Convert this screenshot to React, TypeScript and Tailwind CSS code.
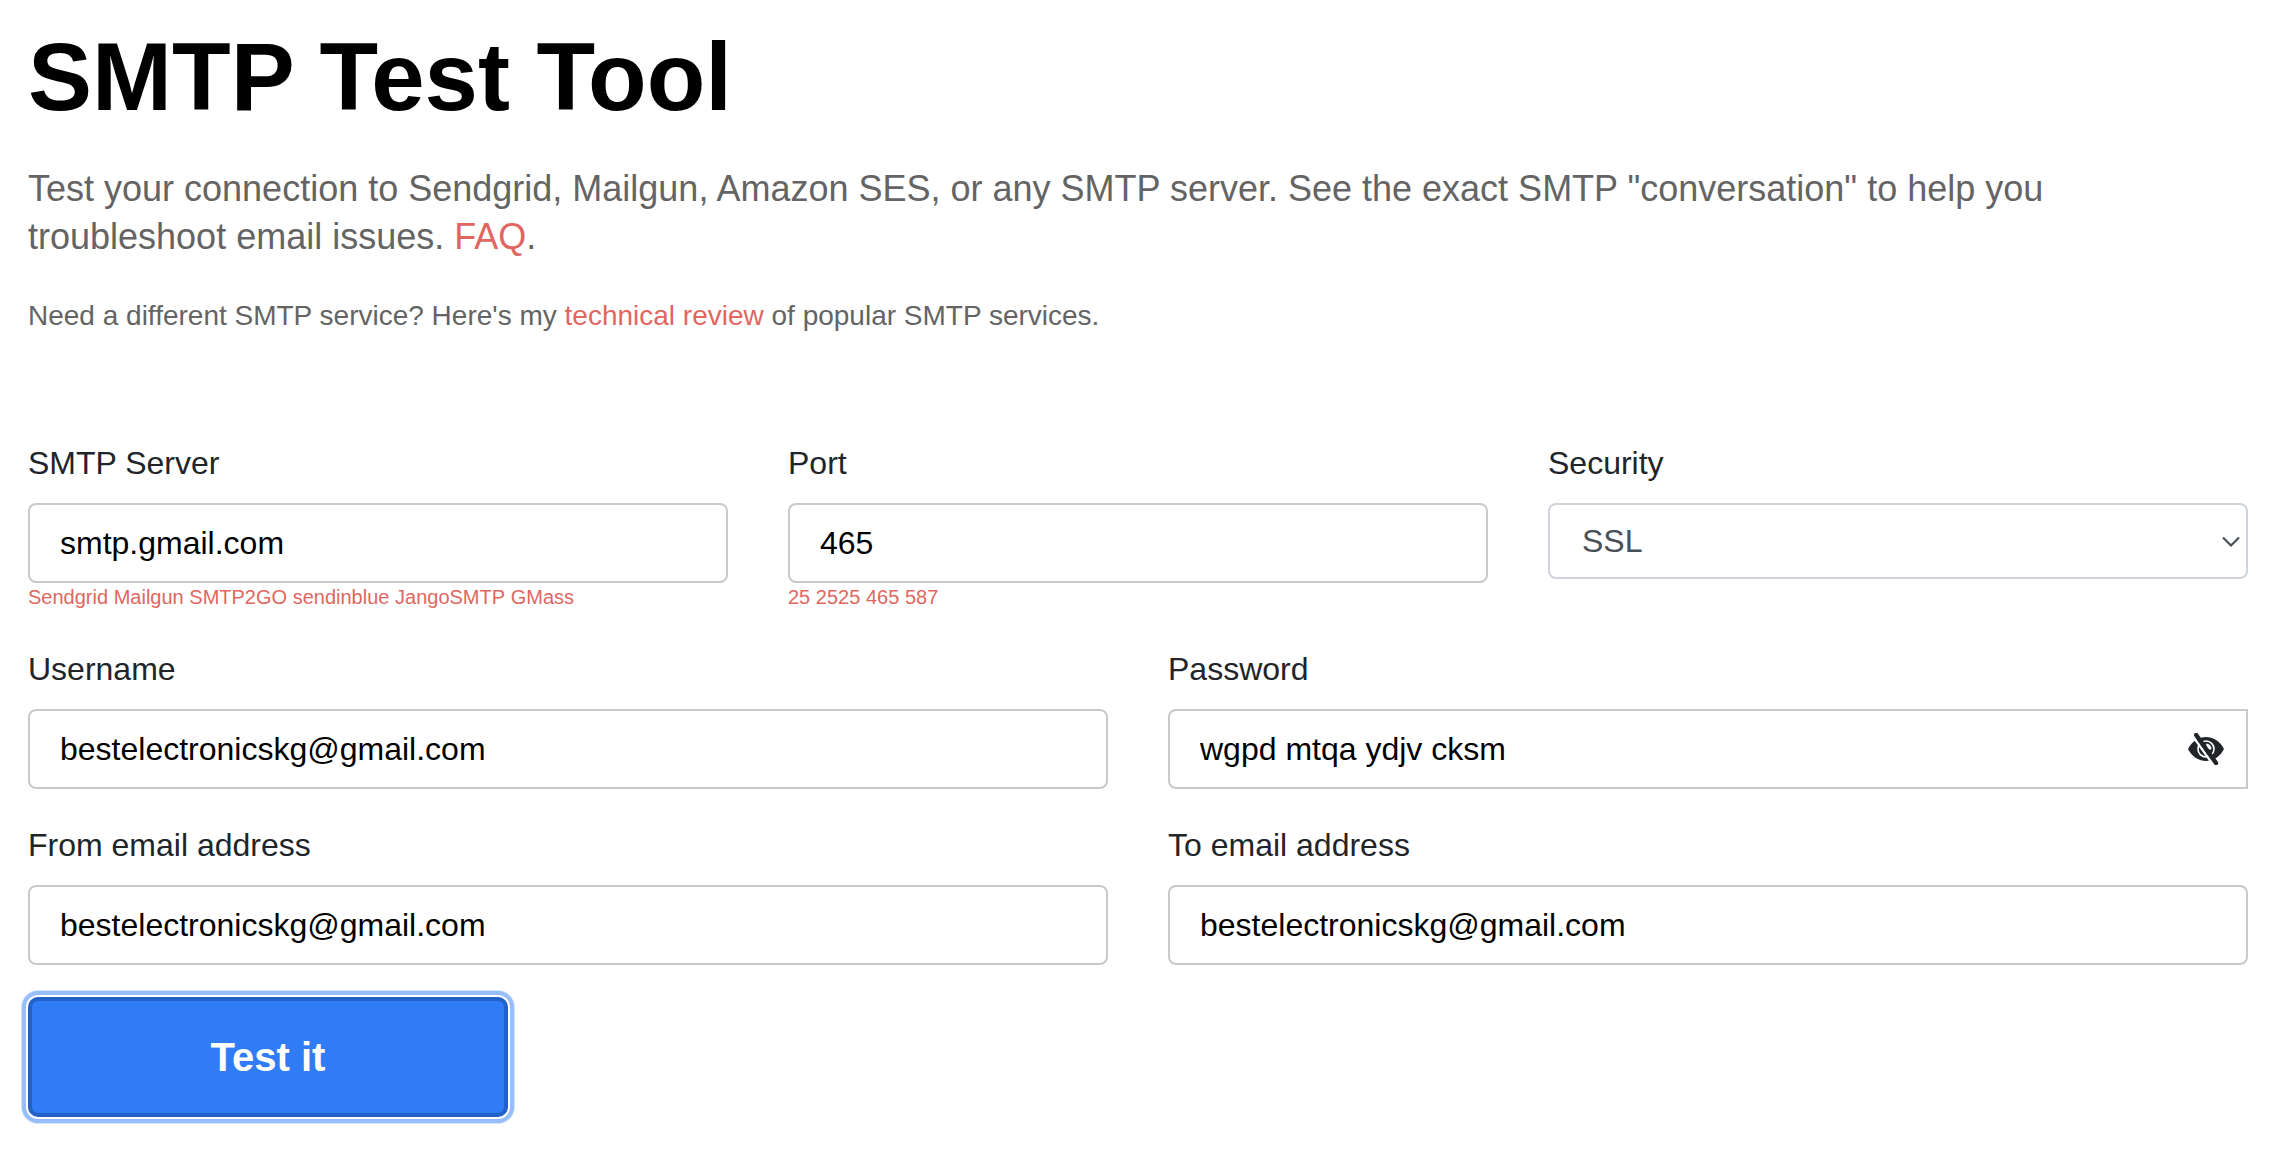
import React, { ReactNode } from "react";

function Field({ label, children }: { label: string; children: ReactNode }) {
  return (
    <div className="min-w-0 flex-1">
      <label className="block text-[32px] leading-12 text-[#212529]">{label}</label>
      <div className="mt-4">{children}</div>
    </div>
  );
}

function TextInput({ value, className = "rounded-lg" }: { value: string; className?: string }) {
  return (
    <input
      defaultValue={value}
      className={`block h-20 w-full border-2 border-[#c9c9c9] bg-white px-[30px] text-[32px] text-black outline-none ${className}`}
    />
  );
}

function Presets({ items }: { items: string[] }) {
  return (
    <div className="mb-0.5 flex gap-[5.6px] text-[20px] leading-7 text-[#e0675f]">
      {items.map((item) => (
        <a key={item} href="#">{item}</a>
      ))}
    </div>
  );
}

function EyeOff() {
  return (
    <svg viewBox="0 0 36 32" className="h-8 w-9" fill="none">
      <path d="M0 16C4 8 11 4 18 4S32 8 36 16C32 24 25 28 18 28S4 24 0 16Z" fill="#212529" />
      <circle cx="18" cy="16" r="8" stroke="#fff" strokeWidth="1.600" />
      <path d="M18 10.500a5.500 5.500 0 0 1 5.500 5.500a3.200 3.200 0 0 1-5-2.500Z" fill="#fff" />
      <path d="M5.300 3.900 25.300 31.900" stroke="#fff" strokeWidth="2.400" />
      <path d="M8.200 2 28 30" stroke="#212529" strokeWidth="4.400" strokeLinecap="round" />
    </svg>
  );
}

export default function App() {
  return (
    <main className="h-[1166px] w-full overflow-hidden bg-white pr-[46px] pl-7 pt-[29px] font-['Liberation_Sans',Arial,sans-serif]">
      <h1 className="text-[96px] leading-24 font-bold text-black">SMTP Test Tool</h1>
      <p className="mt-10 text-[36px] leading-12 text-[#646464]">
        Test your connection to Sendgrid, Mailgun, Amazon SES, or any SMTP server. See the exact SMTP "conversation" to help you
        <br />
        troubleshoot email issues. <a href="#" className="text-[#e0675f]">FAQ</a>.
      </p>
      <p className="mt-[35px] text-[28px] leading-10 text-[#646464]">
        Need a different SMTP service? Here's my <a href="#" className="text-[#e0675f]">technical review</a> of popular SMTP services.
      </p>

      <form>
        <div className="mt-[103px] flex gap-[60px]">
          <Field label="SMTP Server">
            <TextInput value="smtp.gmail.com" />
            <Presets items={["Sendgrid", "Mailgun", "SMTP2GO", "sendinblue", "JangoSMTP", "GMass"]} />
          </Field>
          <Field label="Port">
            <TextInput value="465" />
            <Presets items={["25", "2525", "465", "587"]} />
          </Field>
          <Field label="Security">
            <button type="button" className="flex h-[76px] w-full items-center justify-between rounded-lg border-2 border-[#ced4da] bg-white pr-1.5 pl-8 text-[32px] text-[#495057]">
              SSL
              <svg viewBox="0 0 18 11" className="h-[11px] w-[18px]" fill="none">
                <path d="M1 1.500 9 9.500 17 1.500" stroke="#495057" strokeWidth="2.200" />
              </svg>
            </button>
          </Field>
        </div>

        <div className="mt-8 flex gap-[60px]">
          <Field label="Username">
            <TextInput value="bestelectronicskg@gmail.com" />
          </Field>
          <Field label="Password">
            <div className="relative">
              <TextInput value="wgpd mtqa ydjv cksm" className="rounded-l-lg" />
              <button type="button" aria-label="Hide password" className="absolute top-6 right-6">
                <EyeOff />
              </button>
            </div>
          </Field>
        </div>

        <div className="mt-8 flex gap-[60px]">
          <Field label="From email address">
            <TextInput value="bestelectronicskg@gmail.com" />
          </Field>
          <Field label="To email address">
            <TextInput value="bestelectronicskg@gmail.com" />
          </Field>
        </div>

        <button type="button" className="mt-8 block h-[120px] w-[480px] rounded-[10px] border-4 border-[#2361c8] bg-[#2f7cf6] text-[40px] font-bold text-white shadow-[0_0_0_2px_#fff,0_0_0_6px_#97bdfb,0_0_0_7px_#d5e4fd]">
          Test it
        </button>
      </form>
    </main>
  );
}
